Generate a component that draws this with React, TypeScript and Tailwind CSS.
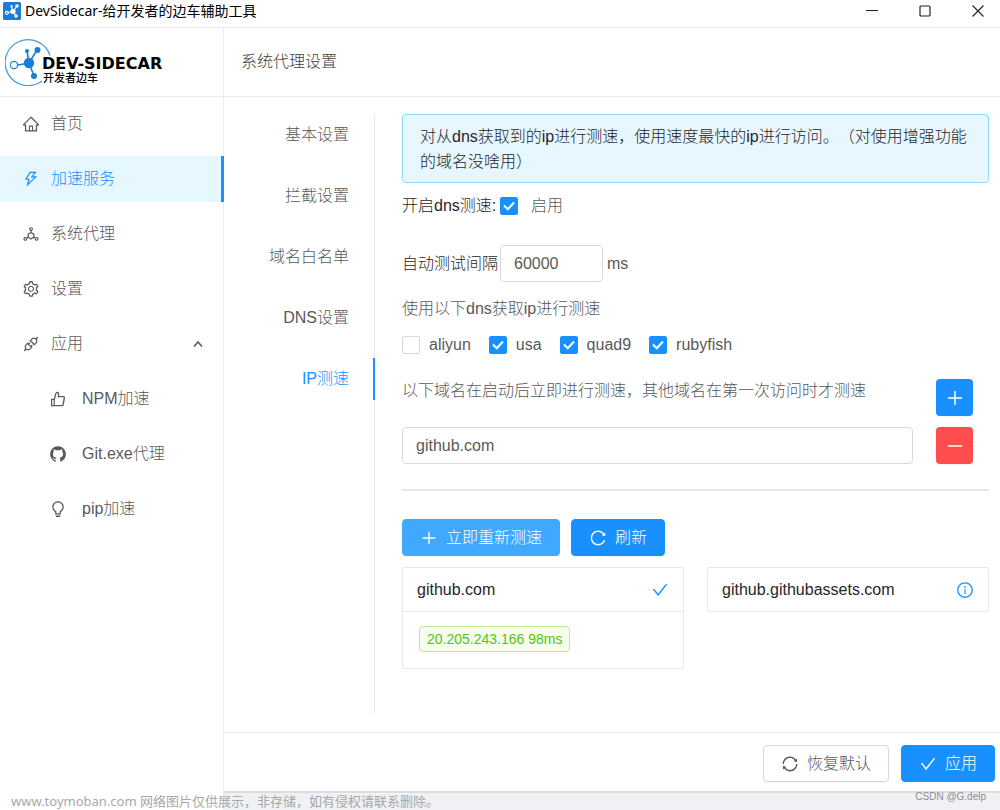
import { useState } from 'react';
import type { ReactNode } from 'react';
import type { IconType } from 'react-icons';
import {
    AiFillGithub,
    AiOutlineApi,
    AiOutlineBulb,
    AiOutlineCheck,
    AiOutlineDeploymentUnit,
    AiOutlineHome,
    AiOutlineInfoCircle,
    AiOutlineLike,
    AiOutlineMinus,
    AiOutlinePlus,
    AiOutlineReload,
    AiOutlineSetting,
    AiOutlineSync,
    AiOutlineThunderbolt,
} from 'react-icons/ai';

const tabs = ['基本设置', '拦截设置', '域名白名单', 'DNS设置', 'IP测速'];

const dnsProviders = [
    { name: 'aliyun', enabled: false },
    { name: 'usa', enabled: true },
    { name: 'quad9', enabled: true },
    { name: 'rubyfish', enabled: true },
];

function TitleBar() {
    return (
        <div className="flex h-7 items-center border-b border-[#ececec] pl-[3px] pb-[6px]">
            <svg className="size-[18px]" viewBox="0 0 18 18" fill="none" aria-hidden="true">
                <rect width="18" height="18" rx="1.5" fill="#1a7fd4" />
                <g stroke="#fff" strokeWidth="1.2">
                    <path d="M5 10.5 10 9.5M10 9.5 14 4M10 9.5 8.5 4.5M10 9.5 13 14" />
                    <circle cx="3.8" cy="10.8" r="1.5" />
                </g>
                <g fill="#fff">
                    <circle cx="10" cy="9.5" r="2.6" />
                    <circle cx="14" cy="4" r="1.7" />
                    <circle cx="8.5" cy="4.2" r="1.1" />
                    <circle cx="13" cy="14" r="1.7" />
                </g>
            </svg>
            <h1 className="ml-1 flex-1 font-['Noto_Sans','Noto_Sans_CJK_SC',sans-serif] text-sm font-normal leading-5 text-black">
                DevSidecar-给开发者的边车辅助工具
            </h1>
            <div className="flex gap-[41px] pr-4 text-[#222]">
                <button type="button" aria-label="最小化">
                    <svg className="size-3" viewBox="0 0 12 12" stroke="currentColor" aria-hidden="true">
                        <path d="M0 5.5h12" />
                    </svg>
                </button>
                <button type="button" aria-label="最大化">
                    <svg className="size-3" viewBox="0 0 12 12" fill="none" stroke="currentColor" aria-hidden="true">
                        <rect x="1" y="1" width="10" height="10" rx="1" strokeWidth="1.2" />
                    </svg>
                </button>
                <button type="button" aria-label="关闭">
                    <svg className="size-3" viewBox="0 0 12 12" stroke="currentColor" strokeWidth="1.1" aria-hidden="true">
                        <path d="M.5.5l11 11M11.5.5l-11 11" />
                    </svg>
                </button>
            </div>
        </div>
    );
}

function Logo() {
    return (
        <div className="flex h-[69px] items-center border-b border-[#ececec] pl-[5px]">
            <svg className="h-[48px] w-[46px] shrink-0" viewBox="0 0 46 48" fill="none" aria-hidden="true">
                <path d="M45 17.5A23 23 0 1 0 37 43" stroke="#4a98da" strokeWidth="1.2" />
                <path d="M13 27 24 25 32 12M24 25 22 13M24 25l5 13" stroke="#1a7fd4" strokeWidth="1.6" />
                <circle cx="9" cy="27" r="3.6" fill="#fff" stroke="#1a7fd4" strokeWidth="1.2" />
                <circle cx="24" cy="25" r="5.2" fill="#1a7fd4" />
                <circle cx="32.5" cy="12" r="3" fill="#1a7fd4" />
                <circle cx="22" cy="13" r="2" fill="#1a7fd4" />
                <circle cx="29" cy="38" r="3" fill="#1a7fd4" />
            </svg>
            <div className="-ml-[9px] pt-4 text-black">
                <p className="font-['DejaVu_Sans',sans-serif] text-base font-bold leading-4">DEV-SIDECAR</p>
                <p className="pl-px text-[11px] font-medium leading-3">开发者边车</p>
            </div>
        </div>
    );
}

function MenuLink({ icon: Icon, label, active }: { icon: IconType; label: string; active?: boolean }) {
    return (
        <a
            href="#"
            className={
                active
                    ? 'flex h-[46px] items-center gap-[11px] border-r-3 border-[#1890ff] bg-[#e6f7ff] pl-[22px] text-[#1890ff]'
                    : 'flex h-[46px] items-center gap-[11px] pl-[22px]'
            }
        >
            <Icon className="size-[18px]" />
            {label}
        </a>
    );
}

function SubMenuLink({ icon: Icon, label }: { icon: IconType; label: string }) {
    return (
        <a href="#" className="flex h-[46px] items-center gap-[15px] pl-[49px]">
            <Icon className="size-[18px]" />
            {label}
        </a>
    );
}

function Sidebar() {
    const [open, setOpen] = useState(true);

    return (
        <aside className="w-56 shrink-0 border-r border-[#ececec]">
            <Logo />
            <nav className="-mr-px mt-1 flex flex-col gap-[9px]">
                <MenuLink icon={AiOutlineHome} label="首页" />
                <MenuLink icon={AiOutlineThunderbolt} label="加速服务" active />
                <MenuLink icon={AiOutlineDeploymentUnit} label="系统代理" />
                <MenuLink icon={AiOutlineSetting} label="设置" />
                <button
                    type="button"
                    aria-expanded={open}
                    onClick={() => setOpen(!open)}
                    className="flex h-[46px] items-center gap-[11px] pl-[22px] pr-5 text-left"
                >
                    <AiOutlineApi className="size-[18px]" />
                    <span className="flex-1">应用</span>
                    <svg
                        className={open ? 'size-3' : 'size-3 rotate-180'}
                        viewBox="0 0 12 12"
                        fill="none"
                        stroke="currentColor"
                        strokeWidth="1.6"
                        aria-hidden="true"
                    >
                        <path d="M2 8.5 6 4l4 4.5" />
                    </svg>
                </button>
                {open && (
                    <>
                        <SubMenuLink icon={AiOutlineLike} label="NPM加速" />
                        <SubMenuLink icon={AiFillGithub} label="Git.exe代理" />
                        <SubMenuLink icon={AiOutlineBulb} label="pip加速" />
                    </>
                )}
            </nav>
        </aside>
    );
}

function Checkbox({ label, defaultChecked, wide }: { label: string; defaultChecked?: boolean; wide?: boolean }) {
    return (
        <label className={wide ? 'flex items-center gap-[13px]' : 'flex items-center gap-[9px]'}>
            <span className="grid place-items-center">
                <input
                    type="checkbox"
                    defaultChecked={defaultChecked}
                    className="peer col-start-1 row-start-1 size-[18px] appearance-none rounded-xs border border-[#d9d9d9] bg-white checked:border-[#1890ff] checked:bg-[#1890ff]"
                />
                <svg
                    className="pointer-events-none invisible col-start-1 row-start-1 size-3 peer-checked:visible"
                    viewBox="0 0 12 12"
                    fill="none"
                    stroke="#fff"
                    strokeWidth="2"
                    aria-hidden="true"
                >
                    <path d="M1 5.5 4.8 9.2 11 2.5" />
                </svg>
            </span>
            {label}
        </label>
    );
}

interface ActionButtonProps {
    icon: IconType;
    children: ReactNode;
    variant?: 'primary' | 'hover' | 'default';
}

const variants = {
    primary: 'border-[#1890ff] bg-[#1890ff] text-white',
    hover: 'border-[#40a9ff] bg-[#40a9ff] text-white',
    default: 'border-[#d9d9d9] bg-white text-[#595959]',
};

function ActionButton({ icon: Icon, children, variant = 'primary' }: ActionButtonProps) {
    return (
        <button
            type="button"
            className={`flex h-[37px] items-center gap-2 rounded border px-[17px] shadow-xs ${variants[variant]}`}
        >
            <Icon className="size-[18px]" />
            {children}
        </button>
    );
}

function SpeedPanel() {
    return (
        <section className="min-w-0 flex-1 pl-[27px]">
            <div className="rounded border border-[#91d5ff] bg-[#e6f7ff] pb-2 pl-[17px] pr-4 pt-[9px] leading-[25px] text-[#262626] [text-spacing-trim:space-all]">
                对从dns获取到的ip进行测速，使用速度最快的ip进行访问。（对使用增强功能的域名没啥用）
            </div>

            <div className="mt-1 flex h-[37px] items-center">
                <span className="w-[98px] whitespace-nowrap text-[#262626]">开启dns测速:</span>
                <Checkbox label="启用" defaultChecked wide />
            </div>

            <div className="mt-[21px] flex h-[37px] items-center">
                <label htmlFor="interval" className="w-[98px] text-[#262626]">
                    自动测试间隔
                </label>
                <input
                    id="interval"
                    defaultValue="60000"
                    className="mr-1 h-[37px] w-[103px] rounded border border-[#d9d9d9] px-[13px]"
                />
                ms
            </div>

            <p className="mt-[15px]">使用以下dns获取ip进行测速</p>
            <div className="mt-3 flex h-6 items-center gap-[18px]">
                {dnsProviders.map(p => (
                    <Checkbox key={p.name} label={p.name} defaultChecked={p.enabled} />
                ))}
            </div>

            <div className="mt-[22px] flex items-start justify-between pr-4">
                <p>以下域名在启动后立即进行测速，其他域名在第一次访问时才测速</p>
                <button
                    type="button"
                    aria-label="添加域名"
                    className="flex size-[37px] items-center justify-center rounded bg-[#1890ff] text-white shadow-xs"
                >
                    <AiOutlinePlus className="size-5" />
                </button>
            </div>
            <div className="mt-[11px] flex gap-[23px] pr-4">
                <input
                    aria-label="测速域名"
                    defaultValue="github.com"
                    className="h-[37px] min-w-0 flex-1 rounded border border-[#d9d9d9] px-[13px]"
                />
                <button
                    type="button"
                    aria-label="删除域名"
                    className="flex size-[37px] items-center justify-center rounded bg-[#ff4d4f] text-white shadow-xs"
                >
                    <AiOutlineMinus className="size-5" />
                </button>
            </div>

            <hr className="mt-[25px] border-t-2 border-[#e8e8e8]" />

            <div className="mt-7 flex gap-[11px]">
                <ActionButton icon={AiOutlinePlus} variant="hover">
                    立即重新测速
                </ActionButton>
                <ActionButton icon={AiOutlineReload}>刷新</ActionButton>
            </div>

            <div className="mt-[11px] grid grid-cols-2 items-start gap-[23px]">
                <article className="rounded-xs border border-[#e8e8e8]">
                    <h3 className="flex h-11 items-center justify-between border-b border-[#e8e8e8] px-[14px] text-[#262626]">
                        github.com
                        <AiOutlineCheck className="size-[18px] text-[#1890ff]" />
                    </h3>
                    <div className="flex px-4 pb-4 pt-[14px]">
                        <span className="flex h-[26px] items-center rounded border border-[#b7eb8f] bg-[#f6ffed] px-[7px] text-sm text-[#52c41a]">
                            20.205.243.166 98ms
                        </span>
                    </div>
                </article>
                <article className="rounded-xs border border-[#e8e8e8]">
                    <h3 className="flex h-[43px] items-center justify-between px-[14px] text-[#262626]">
                        github.githubassets.com
                        <AiOutlineInfoCircle className="size-[18px] text-[#1890ff]" />
                    </h3>
                </article>
            </div>
        </section>
    );
}

export default function App() {
    const [tab, setTab] = useState('IP测速');

    return (
        <div className="flex min-h-screen flex-col bg-white font-['Liberation_Sans','Noto_Sans_CJK_SC',sans-serif] text-base font-light text-[#595959]">
            <TitleBar />
            <div className="flex flex-1">
                <Sidebar />
                <div className="flex min-w-0 flex-1 flex-col">
                    <header className="flex h-[69px] items-center border-b border-[#ececec] pl-[17px]">
                        <h2 className="text-[#404040]">系统代理设置</h2>
                    </header>
                    <main className="flex flex-1 pb-[18px] pr-[11px] pt-[17px]">
                        <div
                            role="tablist"
                            aria-orientation="vertical"
                            className="flex w-[151px] shrink-0 flex-col gap-[19px] border-r border-[#e8e8e8]"
                        >
                            {tabs.map(name => (
                                <button
                                    key={name}
                                    type="button"
                                    role="tab"
                                    aria-selected={tab === name}
                                    onClick={() => setTab(name)}
                                    className={
                                        tab === name
                                            ? '-mr-px h-[42px] border-r-2 border-[#1890ff] pr-6 text-right text-[#1890ff]'
                                            : '-mr-px h-[42px] border-r-2 border-transparent pr-6 text-right'
                                    }
                                >
                                    {name}
                                </button>
                            ))}
                        </div>
                        <SpeedPanel />
                    </main>
                    <footer className="flex justify-end gap-3 border-t border-[#ececec] pb-[9px] pr-[5px] pt-3">
                        <ActionButton icon={AiOutlineSync} variant="default">
                            恢复默认
                        </ActionButton>
                        <ActionButton icon={AiOutlineCheck}>应用</ActionButton>
                    </footer>
                    <div className="h-[19px] border-t-2 border-[#dcdde0] bg-[#f0f1f5]" />
                </div>
            </div>
            <p className="absolute bottom-0 left-[11px] font-['Noto_Sans','Noto_Sans_CJK_SC',sans-serif] text-[13px] font-normal leading-[18px] text-[#a8a8a8] [text-spacing-trim:space-all]">
                www.toymoban.com 网络图片仅供展示，非存储，如有侵权请联系删除。
            </p>
            <p className="absolute bottom-[6px] right-[14px] text-[10px] leading-[14px] text-[#8c8c8c]">CSDN @G.delp</p>
        </div>
    );
}
